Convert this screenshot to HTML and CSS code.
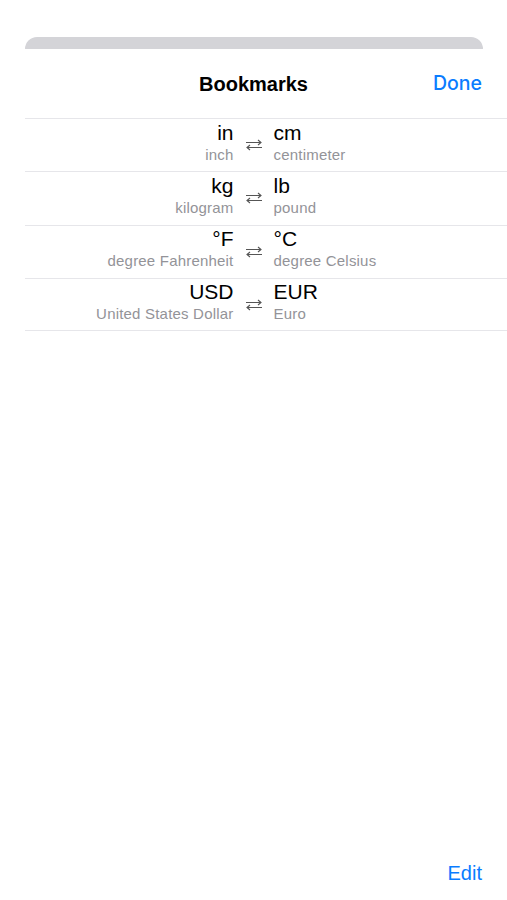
FILE: index.html
```html
<!DOCTYPE html>
<html lang="en">
  <head>
    <meta charset="UTF-8" />
    <meta name="viewport" content="width=device-width, initial-scale=1.0" />
    <title>Bookmarks</title>
    <link rel="stylesheet" href="styles.css">
  </head>
  <body>
    <div class="sheet">
      <div class="grabber"></div>

      <div class="header">
        <span class="title">Bookmarks</span>
        <button class="link done">Done</button>
      </div>

      <div class="list">
        <div class="row">
          <div class="pair">
            <div class="unit from">
              <span class="symbol">in</span>
              <span class="name">inch</span>
            </div>
            <div class="swap">
              <svg width="18" height="12" viewBox="0 0 18 12"><path d="M1 3.5H16M13 1L16 3.5L13 6M17 8.5H2M5 6L2 8.5L5 11" fill="none" stroke="#555" stroke-width="1.1"/></svg>
            </div>
            <div class="unit to">
              <span class="symbol">cm</span>
              <span class="name">centimeter</span>
            </div>
          </div>
        </div>

        <div class="row">
          <div class="pair">
            <div class="unit from">
              <span class="symbol">kg</span>
              <span class="name">kilogram</span>
            </div>
            <div class="swap">
              <svg width="18" height="12" viewBox="0 0 18 12"><path d="M1 3.5H16M13 1L16 3.5L13 6M17 8.5H2M5 6L2 8.5L5 11" fill="none" stroke="#555" stroke-width="1.1"/></svg>
            </div>
            <div class="unit to">
              <span class="symbol">lb</span>
              <span class="name">pound</span>
            </div>
          </div>
        </div>

        <div class="row">
          <div class="pair">
            <div class="unit from">
              <span class="symbol">°F</span>
              <span class="name">degree Fahrenheit</span>
            </div>
            <div class="swap">
              <svg width="18" height="12" viewBox="0 0 18 12"><path d="M1 3.5H16M13 1L16 3.5L13 6M17 8.5H2M5 6L2 8.5L5 11" fill="none" stroke="#555" stroke-width="1.1"/></svg>
            </div>
            <div class="unit to">
              <span class="symbol">°C</span>
              <span class="name">degree Celsius</span>
            </div>
          </div>
        </div>

        <div class="row">
          <div class="pair">
            <div class="unit from">
              <span class="symbol">USD</span>
              <span class="name">United States Dollar</span>
            </div>
            <div class="swap">
              <svg width="18" height="12" viewBox="0 0 18 12"><path d="M1 3.5H16M13 1L16 3.5L13 6M17 8.5H2M5 6L2 8.5L5 11" fill="none" stroke="#555" stroke-width="1.1"/></svg>
            </div>
            <div class="unit to">
              <span class="symbol">EUR</span>
              <span class="name">Euro</span>
            </div>
          </div>
        </div>
      </div>

      <div class="footer">
        <button class="link">Edit</button>
      </div>
    </div>
  </body>
</html>
```

FILE: styles.css
```css
body {
  margin: 0;
  padding: 0;
  background: #fff;
  font-family: "Liberation Sans", Arial, sans-serif;
  color: #000;
}

.sheet {
  display: flex;
  flex-direction: column;
  height: 900px;
  padding-top: 37px;
  box-sizing: border-box;
}

.grabber {
  height: 12px;
  margin: 0 24px 0 25px;
  background: #d4d4d8;
  border-radius: 12px 12px 0 0;
}

.header {
  display: flex;
  align-items: center;
  justify-content: center;
  position: relative;
  height: 69px;
}

.title {
  font-size: 20px;
  line-height: 24px;
  font-weight: bold;
}

.link {
  border: none;
  background: none;
  padding: 0;
  font-family: inherit;
  font-size: 20px;
  line-height: 24px;
  color: #0a7cff;
  cursor: pointer;
}

.done {
  position: absolute;
  right: 25px;
  top: 22px;
  font-family: Inter, "Liberation Sans", sans-serif;
  font-weight: 500;
  font-size: 19.5px;
}

.list {
  flex: 1;
}

.row {
  margin-left: 25px;
  height: 53.3px;
  box-sizing: border-box;
  border-top: 1px solid #e6e6ea;
}

.row:last-child {
  border-bottom: 1px solid #e6e6ea;
}

.pair {
  display: grid;
  grid-template-columns: 1fr 40px 1fr;
  align-items: center;
  margin-left: -25px;
  padding-top: 1.5px;
}

.unit {
  display: flex;
  flex-direction: column;
}

.from {
  align-items: flex-end;
}

.to {
  align-items: flex-start;
}

.symbol {
  font-size: 21px;
  line-height: 24px;
}

.name {
  margin-top: 1px;
  font-size: 15px;
  line-height: 18px;
  letter-spacing: 0.2px;
  color: #939398;
}

.swap {
  display: flex;
  justify-content: center;
  padding-top: 6px;
}

.footer {
  display: flex;
  justify-content: flex-end;
  padding: 0 25px 15px 0;
}
```
